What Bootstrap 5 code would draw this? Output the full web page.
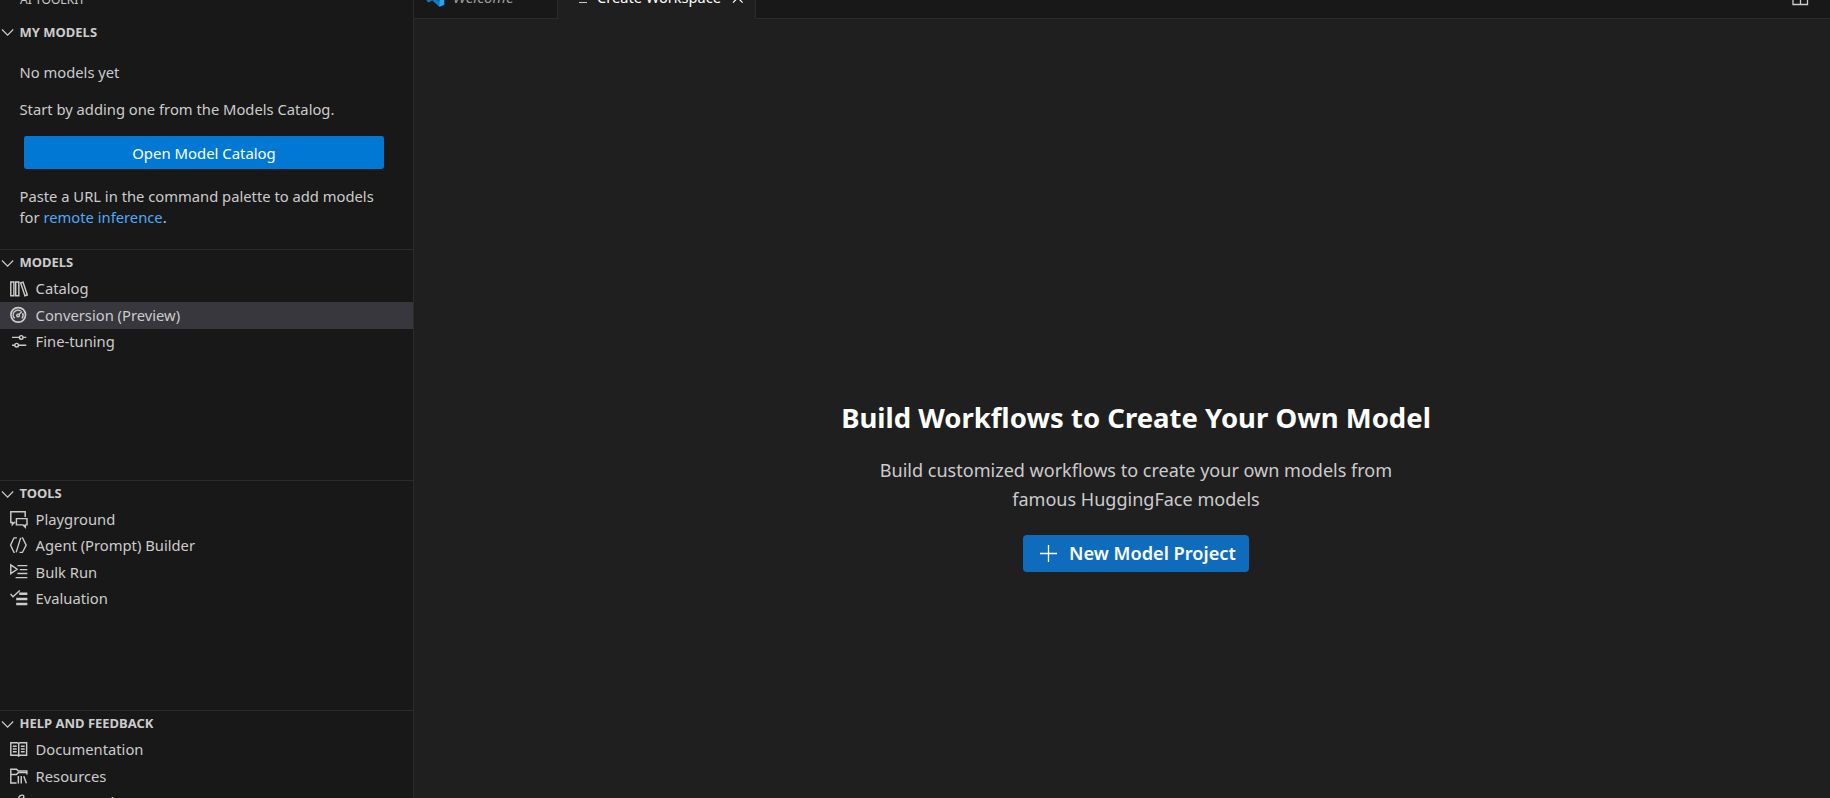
<!DOCTYPE html>
<html lang="en" data-bs-theme="dark">
<head>
<meta charset="utf-8">
<title>AI Toolkit</title>
<link href="https://cdn.jsdelivr.net/npm/bootstrap@5.3.0/dist/css/bootstrap.min.css" rel="stylesheet">
<style>
body{background:#1f1f1f;color:#ccc;font-family:"Noto Sans","Open Sans",sans-serif;font-size:14.75px;line-height:21.2px}
svg{display:block;flex:none;fill:none;stroke:#ccc}
.shell{height:798px;overflow:hidden}
.side{width:414px;background:#181818;border-right:1px solid #2b2b2b;flex:none;overflow:hidden}
.side-title{height:18.8px;flex:none;font-size:12.1px;padding-left:20px}
.side-title span{margin-top:-11.4px}
.pane{flex:none;height:230.4px;overflow:hidden}
.pane+.pane{border-top:1px solid #2b2b2b}
.pane-head{height:26.4px;font-size:13px;font-weight:700;padding-left:1px;gap:2.5px}
.pane:first-of-type .pane-head span{margin-top:1px}
.pane+.pane .pane-head{height:25.6px}
.pane-head svg{margin-top:1px}
.entry{height:26.4px;padding-left:9px;gap:7.4px;white-space:nowrap}
.entry.on{background:#37373d}
.entry svg{width:19.2px;height:19.2px;stroke-width:1.2}
.pane-body{padding:16.8px 29px 0 19.5px}
.pane-body p{margin:0 0 15.8px;white-space:nowrap}
.btn-open{background:#0078d4;color:#fff;border-radius:2.4px;height:33px;width:360px;margin:0 0 16.6px 4.5px;font-size:14.9px;padding:2px 0 0;border:0;line-height:31px}
.side a{color:#4daafc;text-decoration:none}
.tabs{height:19px;background:#181818;flex:none}
.tab-item{height:42px;border-right:1px solid #2b2b2b;border-bottom:1px solid #2b2b2b;white-space:nowrap;font-size:14.6px}
.tab-item.on{background:#1f1f1f;border-bottom-color:#1f1f1f;color:#fff}
.tab-item span,.tab-item i{padding-top:1px}
.tab-idle{width:144px;padding-left:11px;gap:8px;color:#9d9d9d;font-size:15.2px}
.tab-live{width:198px;padding-left:18px;gap:7px}
.tab-rest{height:42px;border-bottom:1px solid #2b2b2b;padding-right:20px}
.welcome-pane{padding:381px 0 0 28px}
h1{font-size:27.5px;font-weight:700;color:#fff;line-height:36px;margin:0 0 19.5px;white-space:nowrap}
.blurb{font-size:18.05px;line-height:29px;margin:0 0 21.5px;white-space:nowrap}
.btn-new{background:#0f6cbd;color:#fff;border-radius:4px;height:37px;width:226px;padding:0 0 0 16px;border:0;font-size:18.2px;font-weight:600;gap:11px;white-space:nowrap}
.btn-new span{padding-top:1px}
</style>
</head>
<body>
<div class="shell d-flex">
<aside class="side d-flex flex-column">
 <div class="side-title d-flex"><span>AI TOOLKIT</span></div>
 <section class="pane">
  <div class="pane-head d-flex align-items-center"><svg width="16" height="16"><path d="M1 5.5l5.6 5.6 5.6-5.6" stroke-width="1.2"/></svg><span>MY MODELS</span></div>
  <div class="pane-body">
   <p>No models yet</p>
   <p>Start by adding one from the Models Catalog.</p>
   <button class="btn btn-open">Open Model Catalog</button>
   <p>Paste a URL in the command palette to add models<br>for <a href="#">remote inference</a>.</p>
  </div>
 </section>
 <section class="pane">
  <div class="pane-head d-flex align-items-center"><svg width="16" height="16"><path d="M1 5.5l5.6 5.6 5.6-5.6" stroke-width="1.2"/></svg><span>MODELS</span></div>
  <div class="entry d-flex align-items-center">
   <svg viewBox="0 0 16 16"><path d="M1.5 2.5h2.6v11.4H1.5zM5.6 2.5h2.6v11.4H5.6zM9.7 3.3l2-.7 3.6 10.7-2 .7z"/></svg><span>Catalog</span></div>
  <div class="entry on d-flex align-items-center">
   <svg viewBox="0 0 16 16"><circle cx="7.7" cy="7.4" r="6.1" stroke-width="1.4"/><path d="M4.7 10.3a4 4 0 0 1 5-6.2M11.3 5.9a4 4 0 0 1-.6 4.4M8 7.4l2.7-2.9"/><circle cx="7.6" cy="7.9" r="1.1"/></svg><span>Conversion (Preview)</span></div>
  <div class="entry d-flex align-items-center">
   <svg viewBox="0 0 16 16"><path d="M2.5 4.5h6M11.8 4.5h2.6M2.5 11h2.4M8 11h6.4"/><circle cx="10.2" cy="4.5" r="1.5"/><circle cx="6.4" cy="11" r="1.5"/></svg><span>Fine-tuning</span></div>
 </section>
 <section class="pane">
  <div class="pane-head d-flex align-items-center"><svg width="16" height="16"><path d="M1 5.5l5.6 5.6 5.6-5.6" stroke-width="1.2"/></svg><span>TOOLS</span></div>
  <div class="entry d-flex align-items-center">
   <svg viewBox="0 0 16 16"><path d="M5.2 10.5H4.3L2.8 12.2v-1.7H1.5v-9h12v4.3M6.2 7.2h8.8v5.2h-1.4v1.9l-1.900-1.900H6.200z"/></svg><span>Playground</span></div>
  <div class="entry d-flex align-items-center">
   <svg viewBox="0 0 16 16"><path d="M6.600 1.600H4.100L1.300 7.600l2.800 6h.800M8.800 13.600h2.500l3-6-3-6h-.8M9.700 1.600L6 13.600" stroke-width="1.100" stroke-linejoin="round"/></svg><span>Agent (Prompt) Builder</span></div>
  <div class="entry d-flex align-items-center">
   <svg viewBox="0 0 16 16"><path d="M1.500 1.600v7.200l5.300-3.600zM7 2.200h8.300M9 5.500h6.300M7 8.800h8.300M5.500 12.200h9.800"/></svg><span>Bulk Run</span></div>
  <div class="entry d-flex align-items-center">
   <svg viewBox="0 0 16 16"><path d="M1.300 4.200l2 2.200L9 1.200"/><path d="M8.500 4h6.800M6 8.300h9.300M6 12.600h9.300" stroke-width="2.100"/></svg><span>Evaluation</span></div>
 </section>
 <section class="pane">
  <div class="pane-head d-flex align-items-center"><svg width="16" height="16"><path d="M1 5.500l5.600 5.600 5.600-5.600" stroke-width="1.200"/></svg><span>HELP AND FEEDBACK</span></div>
  <div class="entry d-flex align-items-center">
   <svg viewBox="0 0 16 16"><path d="M1.500 2.300h5.600l1 .7 1-.7h5.600v10.400H9.100l-1 .8-1-.8H1.500zM8.100 3v10.400M3.200 5.200h3.200M3.200 7.500h3.200M3.200 9.800h3.200M9.900 5.200h3.200M9.900 7.500h3.200M9.900 9.800h3.200"/></svg><span>Documentation</span></div>
  <div class="entry d-flex align-items-center">
   <svg viewBox="0 0 16 16"><path d="M6.300 13.300H1.500V1.800h4.800l1.400 1.500h7.200v3M1.500 6.300h4.700l1.500-1.600h7.200M7.800 7.600v6.200M10.200 7.600v6.200M12.300 7.800l2.200 5.800"/></svg><span>Resources</span></div>
  <div class="entry d-flex align-items-center">
   <svg viewBox="0 0 16 16"><path d="M7.200 7.300c.3-3 1.600-5.200 3.400-5.500 1.200-.2 2 .4 1.700 1.600L10 8M7 7l-5 7"/></svg><span>Get Started</span></div>
 </section>
</aside>
<main class="flex-grow-1 d-flex flex-column">
 <div class="tabs d-flex align-items-end">
  <div class="tab-item tab-idle d-flex align-items-center">
   <svg width="20" height="20" viewBox="0 0 20 20" style="stroke:none"><path d="M14.500 1v5.600L4 14.600 1.300 12.900z" fill="#0f7dc4"/><path d="M1.300 6.800L4 5.300l10.500 8V19z" fill="#0f7dc4"/><path d="M14.300 1l5 2.400v13.400l-5 2.300z" fill="#23a5f3"/></svg>
   <i>Welcome</i></div>
  <div class="tab-item tab-live on d-flex align-items-center">
   <svg width="14" height="16"><path d="M3 4.500h8M3 8.500h8M3 12.500h8" stroke-width="1.200"/></svg>
   <span>Create Workspace</span>
   <svg width="14" height="16" class="ms-1" style="stroke:#fff"><path d="M1 3l9.600 9.600M10.600 3L1 12.600" stroke-width="1.200"/></svg></div>
  <div class="tab-rest flex-grow-1 d-flex justify-content-end align-items-center">
   <svg width="19" height="19"><path d="M2 2.500h14.500v14H2zM9.500 2.500v14" stroke-width="1.300"/></svg></div>
 </div>
 <div class="welcome-pane d-flex flex-column align-items-center">
  <h1>Build Workflows to Create Your Own Model</h1>
  <p class="blurb text-center">Build customized workflows to create your own models from<br>famous HuggingFace models</p>
  <button class="btn btn-new d-flex align-items-center"><svg width="19" height="19"><path d="M9.500 1v17M1 9.500h17" style="stroke:#fff" stroke-width="1.300"/></svg><span>New Model Project</span></button>
 </div>
</main>
</div>
<script src="https://cdn.jsdelivr.net/npm/bootstrap@5.3.0/dist/js/bootstrap.bundle.min.js"></script>
</body>
</html>
